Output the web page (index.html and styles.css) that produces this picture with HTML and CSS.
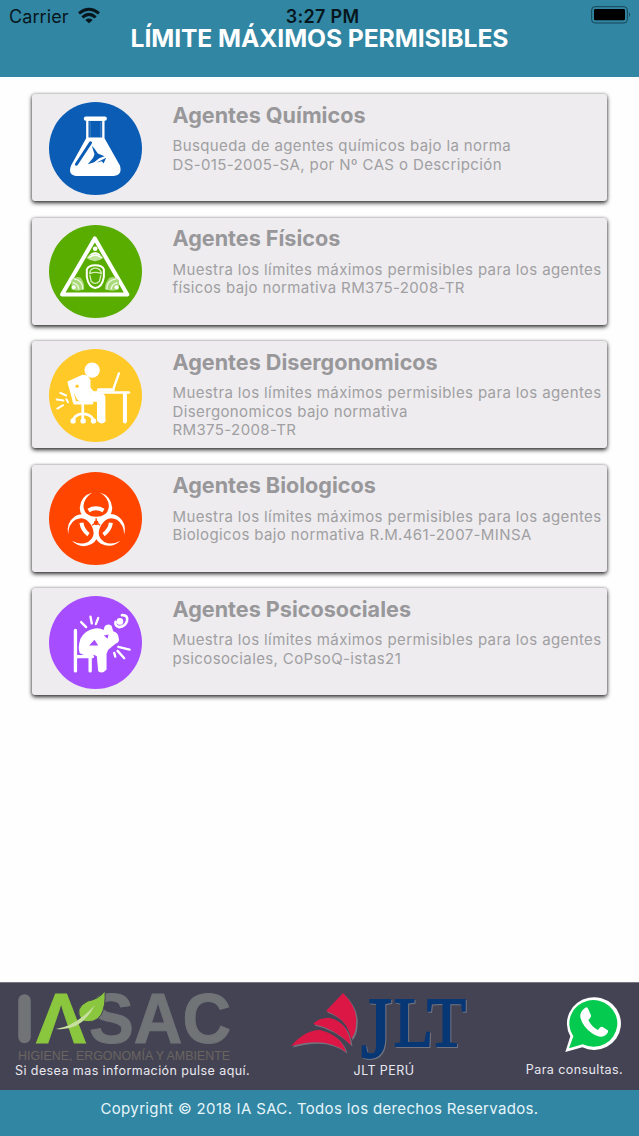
FILE: index.html
```html
<!DOCTYPE html>
<html lang="es">
<head>
<meta charset="utf-8">
<title>Límite Máximos Permisibles</title>
<link rel="stylesheet" href="styles.css">
</head>
<body>
<div class="screen">
  <header class="header">
    <div class="status">
      <div class="status-left">
        <span class="carrier">Carrier</span>
        <svg class="wifi" viewBox="0 0 66 46">
          <path d="M3 16Q33-8 63 16" fill="none" stroke="#07161d" stroke-width="9"/>
          <path d="M13 28Q33 10 53 28" fill="none" stroke="#07161d" stroke-width="9"/>
          <path d="M22 36Q33 27 44 36L33 46Z" fill="#07161d"/>
        </svg>
      </div>
      <span class="time">3:27 PM</span>
      <svg class="battery" viewBox="0 0 120 54">
        <rect x="2" y="2" width="107" height="49" rx="10" fill="none" stroke="#174556" stroke-width="3"/>
        <rect x="9" y="9" width="93" height="34" rx="4" fill="#000"/>
        <path d="M114 19q6 7 0 14z" fill="#174556"/>
      </svg>
    </div>
    <h1 class="title">LÍMITE MÁXIMOS PERMISIBLES</h1>
  </header>

  <main class="list">
    <article class="card">
      <svg class="icon" viewBox="72 49 278 278">
        <circle cx="211" cy="188" r="139" fill="#0b5cb5"/>
        <path d="M183 100V157L138 239Q127 269 155 270H266Q292 268 284 239L238 157V100Z" fill="#fff"/>
        <path d="M190 105H231V155H190Z" fill="#0b5cb5"/>
        <path d="M195 107V154M227 107V154" stroke="#5b95d0" stroke-width="2"/>
        <rect x="176" y="92" width="69" height="13" rx="6" fill="#fff"/>
        <path d="M196 171L154 235" stroke="#0b5cb5" stroke-width="9" stroke-linecap="round"/>
        <path d="M200 180L207 187L218 203L238 211L222 217L207 229L188 235L204 216L208 205ZM215 230L243 216L235 233L230 226Z" fill="#0b5cb5"/>
      </svg>
      <div class="text">
        <h2 class="name">Agentes Químicos</h2>
        <p class="desc">Busqueda de agentes químicos bajo la norma<br>DS-015-2005-SA, por Nº CAS o Descripción</p>
      </div>
    </article>
    <article class="card">
      <svg class="icon" viewBox="27 29 278 278">
        <circle cx="166" cy="168" r="139" fill="#58ad00"/>
        <path d="M164 69L261 237H66Z" fill="none" stroke="#fff" stroke-width="12" stroke-linejoin="round"/>
        <circle cx="165" cy="100" r="7" fill="#fff"/>
        <path d="M139 128Q165 93 189 128Q165 147 139 128Z" fill="#bfe398"/>
        <path d="M146 127Q165 112 184 127M151 119Q165 106 179 119" fill="none" stroke="#fff" stroke-width="4"/>
        <path d="M94 222V194Q108 179 122 187Q134 201 132 221Q113 229 94 222Z" fill="#a9d979"/>
        <path d="M102 190Q128 194 128 222M98 201Q116 205 116 222" fill="none" stroke="#ecf9df" stroke-width="4"/>
        <circle cx="101" cy="215" r="6" fill="#fff"/>
        <path d="M236 222V194Q222 179 208 187Q194 201 194 221Q216 229 236 222Z" fill="#a9d979"/>
        <path d="M228 190Q199 194 200 222M232 201Q213 205 213 222" fill="none" stroke="#ecf9df" stroke-width="4"/>
        <circle cx="229" cy="215" r="6" fill="#fff"/>
        <path d="M140 162Q145 149 165 149Q187 149 191 162V184Q186 216 165 217Q145 215 140 184Z" fill="none" stroke="#fff" stroke-width="6"/>
        <path d="M149 170Q153 158 165 158Q178 158 183 170V174Q166 167 149 174ZM149 179L153 197Q164 210 178 197L182 179" fill="none" stroke="#d5edbd" stroke-width="4"/>
      </svg>
      <div class="text">
        <h2 class="name">Agentes Físicos</h2>
        <p class="desc">Muestra los límites máximos permisibles para los agentes<br>físicos bajo normativa RM375-2008-TR</p>
      </div>
    </article>
    <article class="card">
      <svg class="icon" viewBox="27 25 278 278">
        <circle cx="166" cy="164" r="139" fill="#ffc928"/>
        <g fill="none" stroke="#fff" stroke-linecap="round" stroke-linejoin="round">
          <path d="M50 176L70 179M52 203L69 193M61 156L78 164M79 175L84 184" stroke-width="6"/>
          <path d="M90 133L104 186H155" stroke-width="10"/>
          <path d="M128 190V242M100 240Q101 221 128 218Q157 221 160 240" stroke-width="8"/>
          <path d="M130 170H183V239" stroke-width="25" stroke-linecap="butt"/>
          <path d="M147 143L158 156H173" stroke-width="10"/>
          <path d="M169 155H266" stroke-width="8"/>
          <path d="M254 158V242" stroke-width="12"/>
          <path d="M175 147H219" stroke-width="10"/>
          <path d="M219 146L236 98" stroke-width="7"/>
        </g>
        <path d="M82 122L127 102Q144 101 151 118L151 182H121Q109 178 104 160Q86 151 82 122Z" fill="#fff"/>
        <circle cx="111" cy="136" r="5" fill="#ffc928"/>
        <circle cx="156" cy="88" r="23" fill="#fff"/>
        <circle cx="99" cy="240" r="8" fill="#fff"/><circle cx="129" cy="240" r="8" fill="#fff"/><circle cx="160" cy="240" r="8" fill="#fff"/>
        <path d="M171 235H196V241Q185 255 172 241Z" fill="#fff"/>
      </svg>
      <div class="text">
        <h2 class="name">Agentes Disergonomicos</h2>
        <p class="desc">Muestra los límites máximos permisibles para los agentes<br>Disergonomicos bajo normativa<br>RM375-2008-TR</p>
      </div>
    </article>
    <article class="card">
      <svg class="icon" viewBox="27 30 278 278">
        <circle cx="166" cy="169" r="139" fill="#ff4500"/>
        <defs>
          <path id="lobe" d="M157 91Q121 101 119 137Q119 161 144 173Q158 179 165 193H172Q178 179 192 173Q216 161 216 137Q213 101 179 91Q205 106 206 131Q205 163 168 164Q131 163 130 131Q132 106 157 91Z"/>
        </defs>
        <g fill="#fff">
          <use href="#lobe"/>
          <use href="#lobe" transform="rotate(120 168 181)"/>
          <use href="#lobe" transform="rotate(240 168 181)"/>
        </g>
        <path d="M145 145Q167 132 190 145M124 182Q127 204 145 217M212 182Q209 204 190 217" fill="none" stroke="#fff" stroke-width="12"/>
        <circle cx="168" cy="182" r="7" fill="#ff4500"/>
        <path d="M168 181V168M168 181L156 189M168 181L180 189" stroke="#ff4500" stroke-width="4"/>
      </svg>
      <div class="text">
        <h2 class="name">Agentes Biologicos</h2>
        <p class="desc">Muestra los límites máximos permisibles para los agentes<br>Biologicos bajo normativa R.M.461-2007-MINSA</p>
      </div>
    </article>
    <article class="card">
      <svg class="icon" viewBox="27 26 278 278">
        <circle cx="166" cy="165" r="139" fill="#a64dff"/>
        <g fill="none" stroke="#fff" stroke-linecap="round" stroke-linejoin="round">
          <path d="M106 129V250M108 207H157M150 213V250" stroke-width="10"/>
          <path d="M123 104L138 119M151 88L155 108M174 92L167 110" stroke-width="7"/>
          <path d="M234 178L268 186M232 190L252 212M222 196L225 207" stroke-width="7"/>
          <path d="M245 83Q264 82 260 101Q255 117 237 119Q223 116 226 103" stroke-width="8"/>
        </g>
        <path d="M121 154Q134 128 164 123Q180 120 190 128L194 116Q203 107 214 115L219 131Q235 136 235 151Q240 163 226 169L204 187L199 199V246Q188 260 174 251L170 206Q157 196 145 208L119 197Q112 181 121 154Z" fill="#fff"/>
        <path d="M147 174L163 157L174 174ZM191 144L205 141L202 154Z" fill="#a64dff"/>
        <circle cx="239" cy="102" r="10" fill="#fff"/>
      </svg>
      <div class="text">
        <h2 class="name">Agentes Psicosociales</h2>
        <p class="desc">Muestra los límites máximos permisibles para los agentes<br>psicosociales, CoPsoQ-istas21</p>
      </div>
    </article>
  </main>

  <footer class="footer">
    <div class="sponsors">
      <div class="sponsor s1">
        <svg class="logo-ia" viewBox="0 0 234 80">
          <path d="M9.500 17.500V54" stroke="#707477" stroke-width="12.500" stroke-linecap="round"/>
          <text class="lt green" x="21" y="60" textLength="50" lengthAdjust="spacingAndGlyphs">Λ</text>
          <text class="lt gray" x="74" y="60" textLength="142" lengthAdjust="spacingAndGlyphs">SAC</text>
          <path d="M90 8Q84 16 73 18Q58 25 67 38Q80 41 86 32Q91 23 90 8Z" fill="#8bc63f" stroke="#444354" stroke-width="1"/>
          <path d="M41 46Q61 43 80 22Q66 49 41 46Z" fill="#c7df9f"/>
          <text class="tag" x="3" y="76.500" textLength="212" lengthAdjust="spacingAndGlyphs">HIGIENE, ERGONOMÍA Y AMBIENTE</text>
        </svg>
        <span class="cap">Si desea mas información pulse aquí.</span>
      </div>
      <div class="sponsor s2">
        <svg class="logo-jlt" viewBox="0 0 188 80">
          <g transform="translate(1.500 1.500)" fill="#747480">
            <path d="M56 10Q71 25 69 41Q69 50 64 56Q61 36 39 28Z"/>
            <path d="M26 41Q32 34 43 35Q61 39 64 62Q47 45 26 41ZM4 63Q18 47 33 47Q54 52 59 69Q39 53 4 63Z"/>
          </g>
          <path d="M56 10Q71 25 69 41Q69 50 64 56Q61 36 39 28Z" fill="#dc1746"/>
          <path d="M26 41Q32 34 43 35Q61 39 64 62Q47 45 26 41ZM4 63Q18 47 33 47Q54 52 59 69Q39 53 4 63Z" fill="#dc1746"/>
          <g class="jlt">
            <text x="74" y="74" font-size="86" textLength="31" lengthAdjust="spacingAndGlyphs">J</text>
            <text x="107" y="62.500" font-size="70" textLength="72" lengthAdjust="spacingAndGlyphs">LT</text>
          </g>
        </svg>
        <span class="cap">JLT PERÚ</span>
      </div>
      <div class="sponsor s3">
        <svg class="logo-wa" viewBox="0 0 180 180">
          <path d="M7 174L22 127A81 79 0 1 1 58 160Z" fill="#fff"/>
          <path d="M18 163L31 127A72 70 0 1 1 59 151Z" fill="#05ca50"/>
          <path d="M66 42Q72 36 76 46L84 64Q85 70 76 78Q86 99 105 108Q113 95 119 99L134 109Q138 114 129 122Q115 136 87 118Q58 97 52 70Q50 53 66 42Z" fill="#fff"/>
        </svg>
        <span class="cap">Para consultas.</span>
      </div>
    </div>
    <div class="copyright">Copyright © 2018 IA SAC. Todos los derechos Reservados.</div>
  </footer>
</div>
</body>
</html>
```
FILE: styles.css
```css
* { box-sizing: border-box; }
body { margin: 0; background: #fefefe; font-family: Inter, Roboto, sans-serif; }
h1, h2, p { margin: 0; font-weight: inherit; }
svg { display: block; flex: none; overflow: visible; }
.screen { width: 639px; height: 1136px; display: flex; flex-direction: column; overflow: hidden; }

.header { height: 77px; flex: none; background: #3186a3; }
.status { height: 24px; padding: 6px 8px 0 9px; display: grid; grid-template-columns: 1fr auto 1fr; align-items: start; color: #07161d; font-size: 18px; line-height: 21px; }
.status-left { display: flex; gap: 9px; }
.carrier { letter-spacing: .1px; }
.wifi { width: 22px; height: 15.300px; margin-top: 2px; }
.time { font-weight: 600; letter-spacing: .3px; padding-left: 5px; }
.battery { width: 40px; height: 18px; justify-self: end; }
.title { color: #fff; font-size: 24.700px; line-height: 29px; font-weight: 700; text-align: center; white-space: nowrap; letter-spacing: -.1px; }

.list { flex: 1; padding: 17px 32px 0; display: flex; flex-direction: column; gap: 16.500px; }
.card { height: 107px; flex: none; display: flex; gap: 31px; padding: 7.500px 0 0 17px; background: #eeecef; border-radius: 3px; box-shadow: 0 2px 4px rgba(0,0,0,.8), 0 0 3px rgba(0,0,0,.3); }
.icon { width: 93px; height: 93px; }
.text { margin-left: -.5px; white-space: nowrap; }
.name { color: #98979a; font-size: 21.600px; line-height: 26px; font-weight: 700; }
.desc { margin-top: 9.500px; color: #a09fa2; font-size: 15px; line-height: 18.500px; letter-spacing: .38px; }

.sponsors { height: 108px; padding: 0 16px 0 15px; display: flex; background: #444354; border-top: 1px solid #777683; }
.sponsor { display: flex; flex-direction: column; }
.cap { color: #e9e8ef; font-size: 12.500px; line-height: 16px; letter-spacing: .42px; white-space: nowrap; }
.logo-ia { width: 234px; height: 80px; }
.lt { font: bold 71px "Liberation Sans", sans-serif; stroke-width: 1px; }
.green { fill: #8bc63f; stroke: #8bc63f; }
.gray { fill: #707477; stroke: #707477; }
.tag { font: 13px "Liberation Sans", sans-serif; fill: #6a655f; }
.s1 { width: 234px; }
.s2 { margin-left: 38px; align-items: center; }
.s2 .cap { padding-left: 6px; }
.logo-jlt { width: 188px; height: 80px; }
.jlt { font-family: "Liberation Serif", serif; fill: #083775; stroke: #083775; stroke-width: 2px; filter: drop-shadow(1.500px 1.500px 0 #747480); }
.s3 { margin-left: auto; align-items: flex-end; padding-top: 11px; }
.logo-wa { width: 60px; height: 60px; }
.s3 .cap { margin-top: 8px; }
.copyright { height: 46px; padding-top: 9px; background: #3186a3; color: #e5f5fb; text-align: center; font-size: 15px; line-height: 20px; letter-spacing: .35px; white-space: nowrap; }
```
